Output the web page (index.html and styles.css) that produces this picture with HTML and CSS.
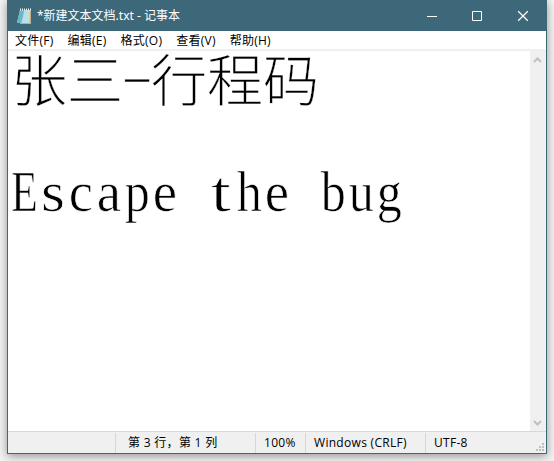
FILE: index.html
```html
<!DOCTYPE html>
<html lang="zh-CN">
<head>
<meta charset="utf-8">
<title>记事本</title>
<link rel="stylesheet" href="styles.css">
</head>
<body>
<div class="window">
  <header class="titlebar">
    <svg class="app-icon" width="16" height="17" viewBox="0 0 16 17">
      <path d="M4 2h11v14H4z" fill="#c9ac7b"/>
      <path d="M4 2h10l-.5 13H1z" fill="#a5d5df"/>
      <path d="M4 2h5L5 15H1z" fill="#6eb5c5"/>
      <path d="M8 2h6l-.5 13H6z" fill="#c1e4e9" opacity=".7"/>
      <path d="M4 1.5h11" stroke="#e9f5f7" stroke-width="2" stroke-dasharray="1 1"/>
    </svg>
    <span class="title">*新建文本文档.txt - 记事本</span>
    <div class="controls">
      <svg width="46" height="30" viewBox="0 0 46 30"><path d="M19 15.5h10"/></svg>
      <svg width="46" height="30" viewBox="0 0 46 30"><path d="M18.5 10.5h9v9h-9z"/></svg>
      <svg width="46" height="30" viewBox="0 0 46 30"><path d="M18.2 10.2l9.6 9.6M27.8 10.2l-9.6 9.6" stroke-width="1.3"/></svg>
    </div>
  </header>
  <nav class="menu"><span>文件(F)</span><span>编辑(E)</span><span>格式(O)</span><span>查看(V)</span><span>帮助(H)</span></nav>
  <main class="editor">
    <div class="document">
      <p class="line cjk">张三<i class="dash">-</i>行程码</p>
      <p class="line"></p>
      <p class="line latin"><i class="cap">E</i><i class="wide">s</i><i>c</i><i class="a">a</i><i class="p">p</i><i>e</i><i> </i><i class="t">t</i><i class="p">h</i><i>e</i><i> </i><i class="p">b</i><i class="p">u</i><i class="p">g</i></p>
    </div>
    <div class="scrollbar">
      <svg width="16" height="17" viewBox="0 0 16 17"><path d="M4 11l3.5-3.5L11 11"/></svg>
      <svg width="16" height="17" viewBox="0 0 16 17"><path d="M4 7l3.5 3.5L11 7"/></svg>
    </div>
  </main>
  <footer class="status">
    <span class="cell empty"></span>
    <span class="cell position">第 3 行，第 1 列</span>
    <span class="cell zoom">100%</span>
    <span class="cell ending">Windows (CRLF)</span>
    <span class="cell encoding">UTF-8</span>
    <svg class="grip" width="8" height="8" viewBox="0 0 8 8"><path d="M6 0h2v2H6zM3 3h2v2H3zM6 3h2v2H6zM0 6h2v2H0zM3 6h2v2H3zM6 6h2v2H6z" fill="#bfbfbf"/></svg>
  </footer>
</div>
</body>
</html>
```
FILE: styles.css
```css
* { box-sizing: border-box; }
body {
  margin: 0;
  padding: 0 7px 7px;
  height: 461px;
  overflow: hidden;
  background: #f3f3f3;
  color: #000;
  font: 12px "Open Sans", "Noto Sans CJK SC", sans-serif;
}
.window {
  display: flex;
  flex-direction: column;
  width: 540px;
  height: 454px;
  border: 1px solid #3d687a;
  background: #fff;
  box-shadow: 0 2px 9px rgba(0, 0, 0, .4);
}
.titlebar {
  display: flex;
  align-items: center;
  height: 30px;
  background: #3d687a;
  color: #fff;
}
.app-icon { margin-left: 8px; }
.title {
  margin-left: 5px;
  font-family: "Noto Sans", "Noto Sans CJK SC", sans-serif;
  line-height: 30px;
  white-space: nowrap;
}
.controls { display: flex; margin-left: auto; }
.controls svg { fill: none; stroke: #fff; }
.menu {
  display: flex;
  gap: 14px;
  height: 18px;
  padding-left: 7px;
  letter-spacing: .25px;
  line-height: 19px;
  white-space: nowrap;
}
.editor {
  display: flex;
  flex: 1;
  min-height: 0;
  border-top: 2px solid #f0f0f0;
}
.document { flex: 1; padding: 0 0 0 3px; }
.line {
  height: 56px;
  margin: 0;
  line-height: 56px;
  white-space: nowrap;
}
.cjk {
  font-family: "Noto Sans CJK SC", sans-serif;
  font-size: 56px;
  font-weight: 300;
  line-height: 51px;
  -webkit-text-stroke: .3px #fff;
}
.line i {
  display: inline-block;
  width: 28px;
  font-style: normal;
  text-align: center;
}
.cjk .dash {
  height: 51px;
  transform: translateY(-5px) scaleX(1.8);
}
.latin {
  display: flex;
  font-family: "Liberation Serif", serif;
  font-size: 57px;
  line-height: 57px;
  white-space: pre;
  -webkit-text-stroke: .7px #fff;
}
.latin i { flex: none; transform: scaleX(.96); }
.latin .cap {
  transform: scaleX(.77);
  transform-origin: 0 50%;
}
.latin .p { transform: scaleX(.88); }
.latin .wide { transform: scaleX(1.08); }
.latin .t { transform: scaleX(1.25); }
.scrollbar {
  display: flex;
  flex-direction: column;
  justify-content: space-between;
  width: 16px;
  background: #f0f0f0;
}
.scrollbar svg { fill: none; stroke: #bfbfbf; stroke-width: 2; }
.status {
  display: flex;
  align-items: flex-end;
  height: 22px;
  border-top: 1px solid #d7d7d7;
  background: #f0f0f0;
  line-height: 20px;
  white-space: nowrap;
}
.cell {
  height: 20px;
  border-right: 1px solid #d7d7d7;
}
.empty { width: 108px; }
.position { width: 140px; padding-left: 12px; letter-spacing: .3px; }
.zoom { width: 50px; padding-left: 8px; letter-spacing: .3px; }
.ending { width: 120px; padding-left: 8px; letter-spacing: .3px; }
.encoding { flex: 1; padding-left: 8px; border: 0; letter-spacing: .3px; }
.grip { margin: 0 2px 2px 0; }
```
